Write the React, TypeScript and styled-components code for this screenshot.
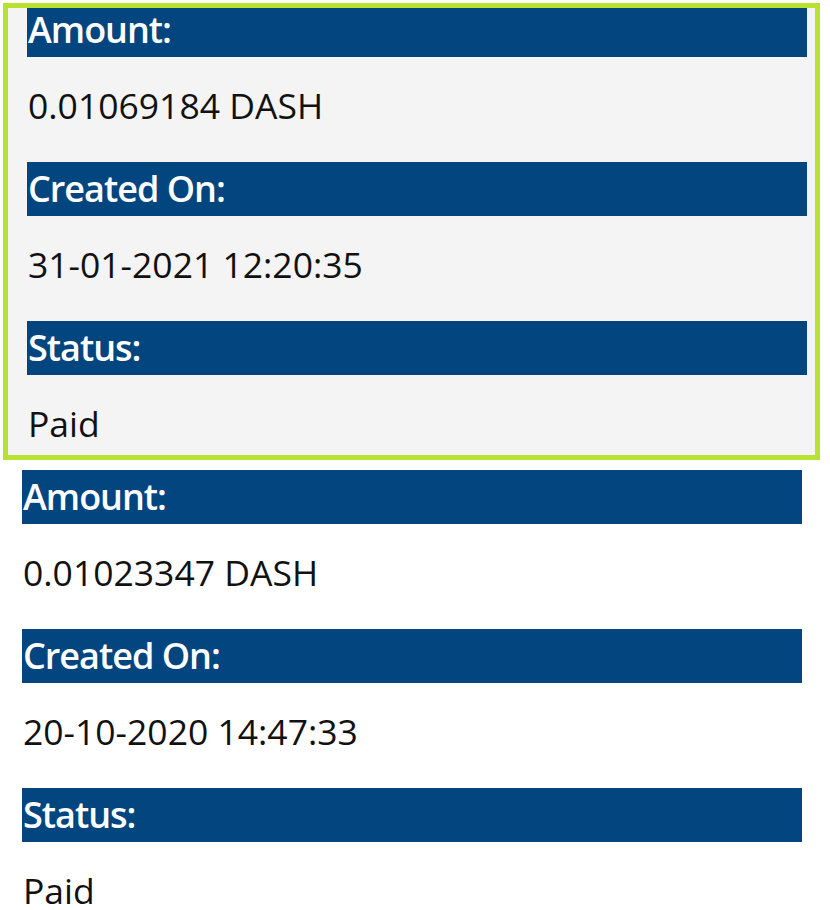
import React from "react";
import styled, { createGlobalStyle } from "styled-components";

const Global = createGlobalStyle`
  html, body { margin: 0; padding: 0; background: #ffffff; }
  body { font-family: "Open Sans", "Noto Sans", sans-serif; overflow: hidden; }
`;

const Page = styled.div`
  display: flex;
  flex-direction: column;
  gap: 10px;
  padding-top: 3px;
`;

const Card = styled.section<{ $selected?: boolean }>`
  margin-left: 3px;
  box-sizing: content-box;
  width: 780px;
  padding: ${(p) => (p.$selected ? "0 13px 0 24px" : "0 0 0 19px")};
  background: ${(p) => (p.$selected ? "#f4f4f4" : "transparent")};
  outline: ${(p) => (p.$selected ? "5px solid #b8e22f" : "none")};
  outline-offset: -5px;
  display: flex;
  flex-direction: column;
`;

const Label = styled.h3`
  margin: 0;
  height: 54px;
  background: #02457f;
  color: #ffffff;
  font-family: "Open Sans", "Noto Sans", sans-serif;
  font-weight: 600;
  font-size: 36px;
  letter-spacing: -1px;
  line-height: 54px;
  padding-left: 1px;
  white-space: nowrap;
`;

const Value = styled.p`
  margin: 0;
  padding: 26px 0 35px 1px;
  font-size: 35.5px;
  line-height: 44px;
  color: #111111;
  white-space: nowrap;
  &:last-child {
    padding-bottom: 15px;
  }
`;

type Payment = { amount: string; created: string; status: string };

const payments: Payment[] = [
  { amount: "0.01069184 DASH", created: "31-01-2021 12:20:35", status: "Paid" },
  { amount: "0.01023347 DASH", created: "20-10-2020 14:47:33", status: "Paid" },
];

export default function App() {
  return (
    <>
      <Global />
      <Page>
        {payments.map((p, i) => (
          <Card key={i} $selected={i === 0}>
            <Label>Amount:</Label>
            <Value>{p.amount}</Value>
            <Label>Created On:</Label>
            <Value>{p.created}</Value>
            <Label>Status:</Label>
            <Value>{p.status}</Value>
          </Card>
        ))}
      </Page>
    </>
  );
}
